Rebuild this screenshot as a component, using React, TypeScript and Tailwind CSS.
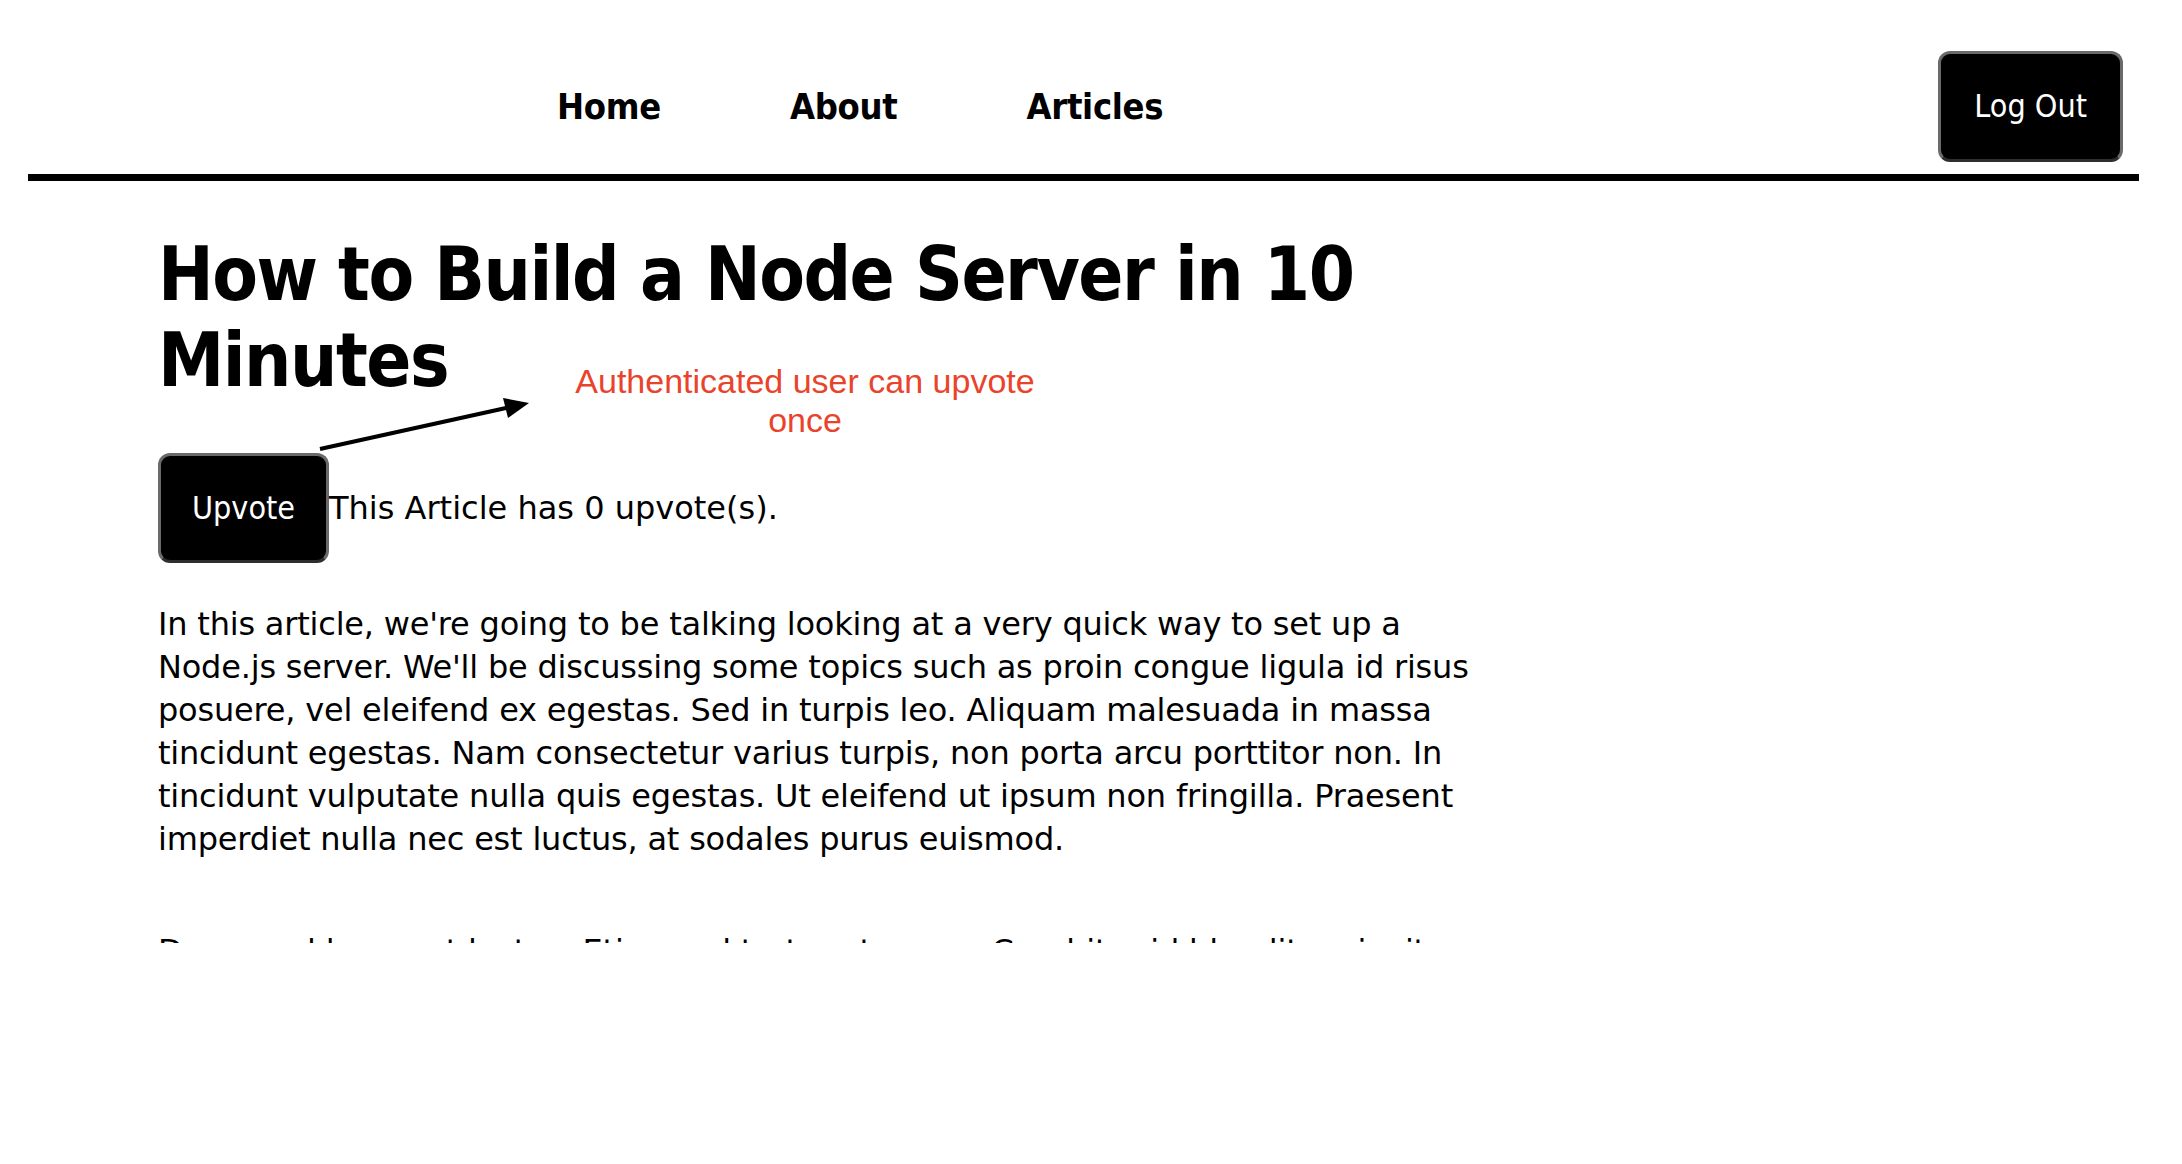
import React from 'react';

const navLinks = ['Home', 'About', 'Articles'];

const paragraphs = [
  "In this article, we're going to be talking looking at a very quick way to set up a Node.js server. We'll be discussing some topics such as proin congue ligula id risus posuere, vel eleifend ex egestas. Sed in turpis leo. Aliquam malesuada in massa tincidunt egestas. Nam consectetur varius turpis, non porta arcu porttitor non. In tincidunt vulputate nulla quis egestas. Ut eleifend ut ipsum non fringilla. Praesent imperdiet nulla nec est luctus, at sodales purus euismod.",
  'Donec vel lorem at lectus. Etiam vel tortor at purus. Curabitur id blandit orci, vitae convallis tellus. Nam ut tempus ante, nec facilisis arcu. Integer volutpat dui at sem fermentum pretium.',
];

const Button = ({ children, className = '' }: { children: React.ReactNode; className?: string }) => (
  <button
    className={`bg-black text-white text-[32px] leading-[37px] rounded-[12px] border-[3px] border-[#6a6a6a] border-b-[#2e2e2e] ${className}`}
  >
    {children}
  </button>
);

const App: React.FC = () => {
  return (
    <div className="relative min-h-screen bg-white text-black font-['DejaVu_Sans_Condensed','DejaVu_Sans',sans-serif] [font-stretch:condensed]">
      {/* header */}
      <header className="flex items-center pt-[51px] pb-[12px] pr-[59px]">
        <nav className="flex items-center gap-[129px] ml-[557px]">
          {navLinks.map((l) => (
            <a key={l} className="text-[36px] font-bold tracking-[-0.3px]">
              {l}
            </a>
          ))}
        </nav>
        <Button className="ml-auto px-[33px] h-[111px]">Log Out</Button>
      </header>
      <div className="ml-[28px] w-[2111px] h-[7px] bg-black" />

      {/* article */}
      <main className="h-[762px] overflow-hidden pl-[158px]">
        <div className="w-[1330px]">
          <h1 className="mt-[50px] text-[74px] leading-[86px] font-bold tracking-[-1.5px]">
            How to Build a Node Server in 10 Minutes
          </h1>
          <div className="flex items-center mt-[50px]">
            <Button className="px-[31px] h-[110px]">Upvote</Button>
            <span className="text-[32px] font-['DejaVu_Sans',sans-serif] [font-stretch:normal]">
              This Article has 0 upvote(s).
            </span>
          </div>
          <div className="text-[32px] leading-[43px] tracking-[-0.2px] font-['DejaVu_Sans',sans-serif] [font-stretch:normal]">
            <p className="mt-[40px]">{paragraphs[0]}</p>
            <p className="mt-[69px]">{paragraphs[1]}</p>
          </div>
        </div>
      </main>

      {/* annotation */}
      <div className="absolute left-[555px] top-[362px] w-[500px] text-center text-[34px] leading-[39px] text-[#e9442b] font-['Liberation_Sans',Arial,sans-serif] [font-stretch:normal]">
        Authenticated user can upvote once
      </div>
      <svg className="absolute left-[300px] top-[380px]" width="240" height="80" viewBox="0 0 240 80">
        <line x1="20" y1="69" x2="206" y2="28" stroke="black" strokeWidth="4" />
        <polygon points="229,23 208,38 203,18" fill="black" />
      </svg>
    </div>
  );
};

export default App;
